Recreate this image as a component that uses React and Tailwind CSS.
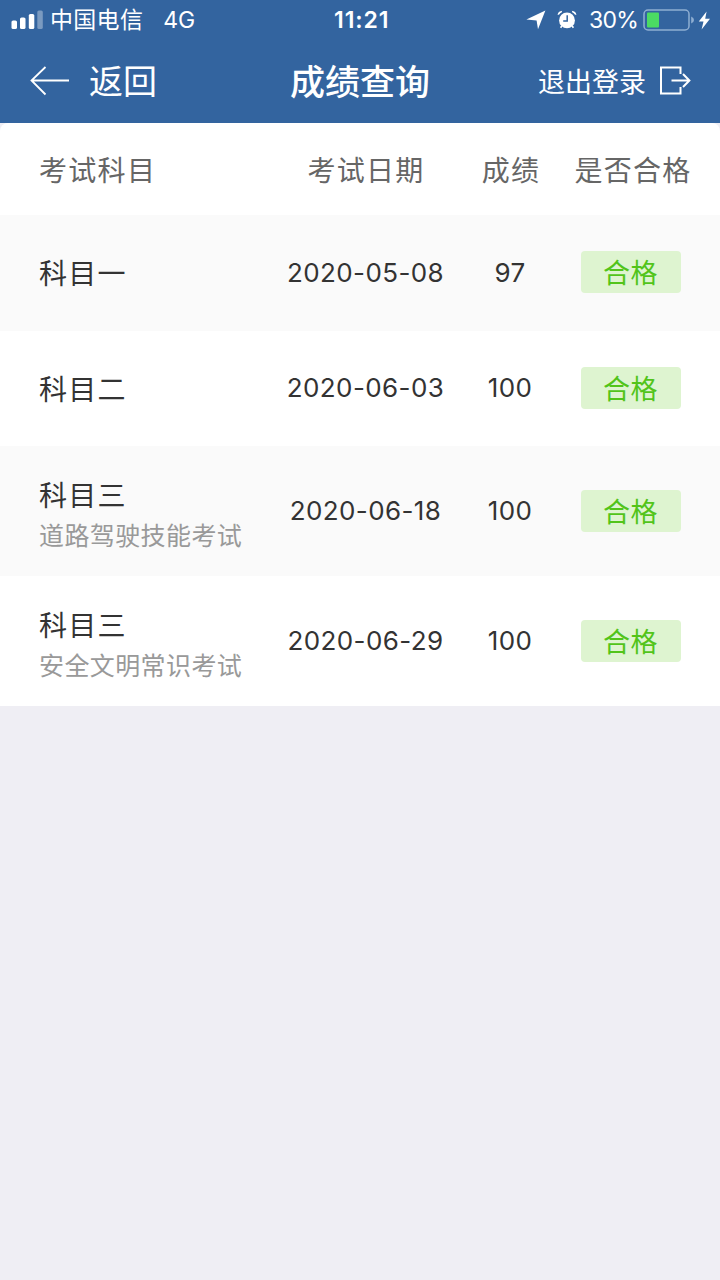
import React from "react";

const results = [
    { subject: "科目一", date: "2020-05-08", score: 97 },
    { subject: "科目二", date: "2020-06-03", score: 100 },
    { subject: "科目三", detail: "道路驾驶技能考试", date: "2020-06-18", score: 100 },
    { subject: "科目三", detail: "安全文明常识考试", date: "2020-06-29", score: 100 },
];

function StatusBar() {
    return (
        <div className="h-10 flex items-center text-[23px] leading-none">
            {/* Carrier */}
            <div className="w-[334px] pl-[11px] flex items-center">
                <svg width="33" height="20" viewBox="0 0 33 20" fill="currentColor">
                    <rect x="0.5" y="10.5" width="5.5" height="8.5" rx="1.6" />
                    <rect x="9" y="7.5" width="5.5" height="11.5" rx="1.6" />
                    <rect x="17.8" y="4" width="5.5" height="15" rx="1.6" />
                    <rect x="26.3" y="0.5" width="5.5" height="18.5" rx="1.6" opacity="0.35" />
                </svg>
                <span className="ml-[6px] pt-[1px] tracking-[0.3px]">中国电信</span>
                <span className="ml-5">4G</span>
            </div>

            <span className="w-[192px] font-semibold tracking-[0.9px]">11:21</span>

            {/* Location, alarm, battery */}
            <svg width="20" height="20" viewBox="0 0 20 20" fill="currentColor">
                <path d="M19.4 0.4L12 19.2L10.6 10.6L0.4 9.4Z" />
            </svg>
            <svg className="ml-[11px]" width="20" height="20" viewBox="0 0 20 20" fill="none">
                <circle cx="10" cy="10.4" r="7.9" fill="currentColor" />
                <path d="M10.2 5.2V11H6.2" stroke="#33649f" strokeWidth="1.5" />
                <path d="M0.6 5Q1 1.2 5.2 0.8L4.6 2.4Q3 3 2.2 4.6ZM19.4 5Q19 1.2 14.8 0.8L15.4 2.4Q17 3 17.8 4.6Z" fill="currentColor" />
                <path d="M4.8 16L3.6 17.8M15.2 16L16.4 17.8" stroke="currentColor" strokeWidth="1.6" />
            </svg>
            <span className="ml-3 w-[54px] tracking-[-0.7px]">30%</span>
            <svg width="52" height="22" viewBox="0 0 52 22" fill="none">
                <rect x="1" y="1" width="45" height="20" rx="4" stroke="#8faed2" strokeWidth="1.5" />
                <rect x="4" y="3.5" width="12" height="15" rx="1" fill="#4bdb63" />
                <path d="M48.2 7.5Q51 8.5 51 11T48.2 14.5Z" fill="#8faed2" />
            </svg>
            <svg className="ml-[3px]" width="13" height="19" viewBox="0 0 13 19" fill="currentColor">
                <path d="M8.6 0.5L0.8 10.6H5.5L3.6 18.5L12 7.8H7.2Z" />
            </svg>
        </div>
    );
}

function NavBar() {
    return (
        <div className="h-[83px] pb-[2px] grid grid-cols-[290px_1fr_182px] items-center">
            <button className="flex items-center pl-[30px] text-[34px] leading-none">
                <svg width="40" height="30" viewBox="0 0 40 30" fill="none" stroke="currentColor" strokeWidth="1.8">
                    <path d="M39 14.5H1.5M15.5 1L1.5 14.5L15.5 28.5" />
                </svg>
                <span className="ml-[19px] pt-[2px]">返回</span>
            </button>
            <h1 className="pt-[3px] text-[35px] leading-none font-medium">成绩查询</h1>
            <button className="flex items-center text-[27px] leading-none">
                <span className="pt-[3px]">退出登录</span>
                <svg className="ml-[13px]" width="32" height="30" viewBox="0 0 32 30" fill="none" stroke="currentColor" strokeWidth="2">
                    <path d="M21.5 8V1.5H2V27.5H21.5V21" />
                    <path d="M12.5 14.5H30M24 8L30.4 14.5L24 21" />
                </svg>
            </button>
        </div>
    );
}

export default function App() {
    return (
        <div className="w-[720px] h-[1280px] overflow-hidden bg-[#efeef4] font-['Inter','Noto_Sans_CJK_SC',sans-serif]">
            <header className="bg-[#33649f] text-white">
                <StatusBar />
                <NavBar />
            </header>

            <main className="bg-white rounded-t-lg overflow-hidden">
                {/* Table head */}
                <div className="h-[92px] pt-[3px] pr-[27px] grid grid-cols-[280px_172px_118px_1fr] items-center text-center text-[28px] tracking-[1.3px] text-[#666]">
                    <span className="pl-[39px] text-left">考试科目</span>
                    <span>考试日期</span>
                    <span>成绩</span>
                    <span className="pl-[3px] whitespace-nowrap">是否合格</span>
                </div>

                {results.map((item) => (
                    <div
                        key={item.date}
                        className={`${item.detail ? "h-[130px]" : "h-[115.5px]"} pb-[1px] pr-[28px] grid grid-cols-[280px_171px_118px_1fr] items-center text-center text-[26px] text-[#333] odd:bg-white even:bg-[#fafafa]`}
                    >
                        <div className={`${item.detail ? "pt-[10px]" : "pt-[4px]"} pl-[39px] text-left`}>
                            <p className="text-[28px] leading-[42px] tracking-[1.2px]">{item.subject}</p>
                            {item.detail && (
                                <p className="text-[25px] leading-[39px] tracking-[0.4px] text-[#999]">{item.detail}</p>
                            )}
                        </div>
                        <span className="tracking-[0.4px]">{item.date}</span>
                        <span className="tracking-[0.3px]">{item.score}</span>
                        <span className="justify-self-center w-[100px] h-[42px] rounded bg-[#def4d0] text-[27px] leading-[45px] tracking-[0.5px] text-[#52c41a]">
                            合格
                        </span>
                    </div>
                ))}
            </main>
        </div>
    );
}
